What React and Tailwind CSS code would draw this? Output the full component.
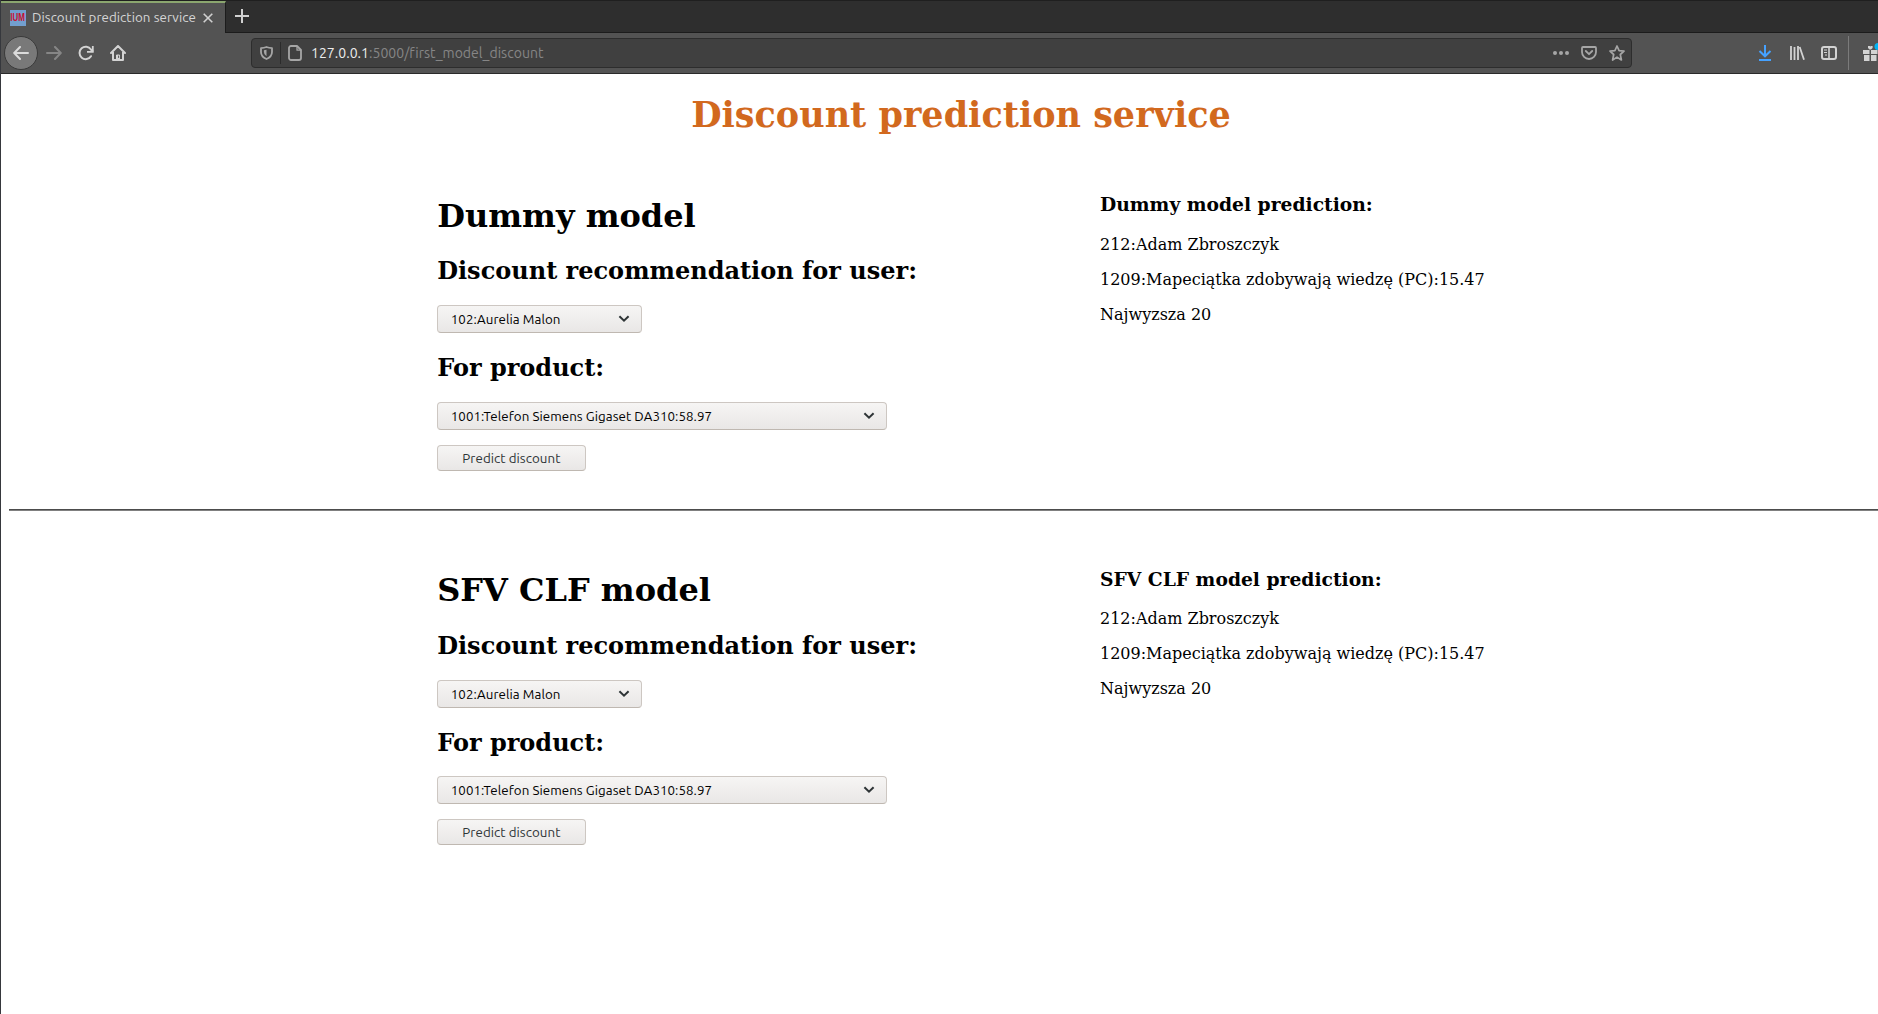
import React from "react";

const UI = "font-['Ubuntu','Noto_Sans',sans-serif]";

function Chevron() {
  return (
    <svg width="12" height="8" viewBox="0 0 12 8" fill="none" stroke="#2e3436" strokeWidth="2">
      <path d="M1.4 1.3 6 5.7 10.6 1.3" />
    </svg>
  );
}

function Select({ className, children }) {
  return (
    <button className={`flex h-7 items-center justify-between rounded-[4px] border border-[#cdc7c2] border-b-[#bfb8b1] bg-linear-to-b from-[#f6f5f4] to-[#e9e7e6] pr-[11px] pl-[12.6px] text-[13.333px] text-black ${UI} ${className}`}>
      <span className="pt-[2.2px] tracking-[0.06px] whitespace-nowrap">{children}</span>
      <Chevron />
    </button>
  );
}

function Model({ name, className }) {
  return (
    <section className={`flex pl-[428.2px] ${className}`}>
      <div className="w-[662.8px] shrink-0 pt-1">
        <h1 className="text-[32px] leading-[38px] font-bold">{name}</h1>
        <h2 className="mt-[22.2px] text-2xl leading-7 font-bold">Discount recommendation for user:</h2>
        <Select className="mt-5 w-[205px]">102:Aurelia Malon</Select>
        <h2 className="mt-[21px] text-2xl leading-7 font-bold">For product:</h2>
        <Select className="mt-[19.8px] w-[450px]">1001:Telefon Siemens Gigaset DA310:58.97</Select>
        <button className={`mt-[15px] flex h-[26px] w-[149px] items-center justify-center rounded-[4px] border border-[#cdc7c2] border-b-[#bfb8b1] bg-linear-to-b from-[#f6f5f4] to-[#e9e7e6] text-[13.333px] text-[#2e3436] ${UI}`}>
          <span className="pt-[2.2px] pr-[0.6px] tracking-[0.06px]">Predict discount</span>
        </button>
      </div>
      <div>
        <h3 className="mt-[0.2px] text-[18.72px] leading-[22px] font-bold">{name} prediction:</h3>
        <p className="mt-[19.8px] text-base leading-[19px]">212:Adam Zbroszczyk</p>
        <p className="mt-4 text-base leading-[19px]">1209:Mapeciątka zdobywają wiedzę (PC):15.47</p>
        <p className="mt-4 text-base leading-[19px]">Najwyzsza 20</p>
      </div>
    </section>
  );
}

function TabStrip() {
  return (
    <div className="flex h-[33px] border-t border-[#1f1f1f] bg-[#2e2e2e]">
      <div className="flex h-8 w-[225px] items-center border-t-2 border-r border-t-[#8ba66f] border-r-[#1c1c1c] bg-[#535353] pb-px pl-[9px]">
        <span className="flex size-4 items-center justify-center bg-[#729fcf] font-['Liberation_Sans',sans-serif] text-[10.5px] leading-none font-bold text-[#c8102c]">
          <span className="scale-x-[0.76]">IUM</span>
        </span>
        <span className="ml-[6px] w-[165px] pt-px text-[13.333px] tracking-[0.07px] whitespace-nowrap text-[#d6d6d6]">Discount prediction service</span>
        <svg className="ml-[6px]" width="10" height="10" viewBox="0 0 10 10" stroke="#d0d0d0" strokeWidth="1.6"><path d="M.7.7l8.6 8.6M9.3.7.7 9.3" /></svg>
      </div>
      <div className="flex flex-1 items-center border-b border-[#1c1c1c] pb-px pl-[9px]">
        <svg width="14" height="14" viewBox="0 0 14 14" stroke="#d0d0d0" strokeWidth="2"><path d="M7 0v14M0 7h14" /></svg>
      </div>
    </div>
  );
}

function NavBar() {
  return (
    <div className="flex h-[41px] items-center border-b border-[#2a2a2a] bg-[#535353]">
      <span className="ml-[3px] flex size-[34px] items-center justify-center rounded-full border border-[#3a3a3a] bg-[#797979]">
        <svg width="16" height="14" viewBox="0 0 16 14" fill="none" stroke="#dcdcdc" strokeWidth="2" strokeLinecap="round" strokeLinejoin="round"><path d="M15 7H1.300M7 1 1.200 7 7 13" /></svg>
      </span>
      <svg className="ml-[8px]" width="16" height="14" viewBox="0 0 16 14" fill="none" stroke="#868686" strokeWidth="2" strokeLinecap="round" strokeLinejoin="round"><path d="M1 7h13.700M9 1l5.800 6L9 13" /></svg>
      <svg className="ml-4" width="16" height="16" viewBox="0 0 16 16" fill="none" stroke="#d3d3d3" strokeWidth="2"><path d="M13 11.200A6.200 6.200 0 1 1 12.900 4.500L14.500 6" strokeLinecap="round" /><path d="M14.800 1v5.800H9" strokeWidth="1.800" /></svg>
      <svg className="ml-4" width="16" height="16" viewBox="0 0 16 16" fill="none" stroke="#d3d3d3" strokeWidth="2" strokeLinejoin="round" strokeLinecap="round"><path d="M1 8l7-7 7 7M3 7v8h10V7" /><path d="M6.500 15v-5h3v5z" fill="#d3d3d3" strokeWidth="1" /><path d="M8.600 11v1.500" stroke="#535353" strokeWidth="1" /></svg>
      <div className="ml-[125px] flex h-[30px] w-[1381px] items-center rounded-[4px] border border-[#2d2d2d] bg-[#404040]">
        <svg className="ml-2" width="13" height="14" viewBox="0 0 13 14" fill="none" stroke="#a6a6a6"><path d="M1 2.200Q4 2 6.500 1 9 2 12 2.200V6q0 4.700-5.500 7Q1 10.700 1 6z" strokeWidth="1.800" strokeLinejoin="round" /><path d="M6.500 3.800v6.500Q3.900 8.800 3.900 6V4.300z" fill="#a6a6a6" stroke="none" /></svg>
        <span className="ml-[7px] h-[22px] w-px bg-[#2b2b2b]" />
        <svg className="ml-[7px]" width="14" height="16" viewBox="0 0 14 16" fill="none" stroke="#a6a6a6" strokeWidth="2" strokeLinejoin="round"><path d="M3 1h6l4 4v8a2 2 0 0 1-2 2H3a2 2 0 0 1-2-2V3a2 2 0 0 1 2-2z" strokeWidth="1.800" /><path d="M9 1v4.200h4" strokeWidth="1.300" /></svg>
        <span className="ml-[9px] pt-[1.5px] text-[14px] tracking-[0.03px] whitespace-nowrap text-[#868686]"><span className="text-[#ededed]">127.0.0.1</span>:5000/first_model_discount</span>
        <div className="ml-auto flex items-center pr-[6px]">
          <svg width="16" height="4" viewBox="0 0 16 4" fill="#a6a6a6"><circle cx="2" cy="2" r="2" /><circle cx="8" cy="2" r="2" /><circle cx="14" cy="2" r="2" /></svg>
          <svg className="ml-3" width="16" height="14" viewBox="0 0 16 14" fill="none" stroke="#a6a6a6" strokeWidth="2" strokeLinecap="round" strokeLinejoin="round"><path d="M2 1h12q1 0 1 1v4a7 7 0 0 1-14 0V2q0-1 1-1zM4.800 5 8 8.200 11.200 5" strokeWidth="1.800" /></svg>
          <svg className="ml-3" width="16" height="16" viewBox="0 0 16 16" fill="none" stroke="#a6a6a6" strokeWidth="1.700" strokeLinejoin="round"><path d="M8 1l2.100 4.600 4.900.5-3.700 3.400L12.400 15 8 12.100 3.600 15l1.100-5.500L1 6.100l4.900-.5z" /></svg>
        </div>
      </div>
      <svg className="ml-[126px]" width="14" height="16" viewBox="0 0 14 16" fill="none" stroke="#45a1ff" strokeWidth="2"><path d="M7 0v11M1.500 6 7 11.300 12.500 6M1 15h12" /></svg>
      <svg className="ml-[17px]" width="16" height="14" viewBox="0 0 16 14" stroke="#d3d3d3" strokeWidth="1.800"><path d="M2 0v14M5.500 1v13M9 0v14M10.700 1l4.300 12.700" /></svg>
      <svg className="ml-4" width="16" height="14" viewBox="0 0 16 14" fill="none" stroke="#d3d3d3"><rect x="1" y="1" width="14" height="12" rx="2" strokeWidth="2" /><path d="M8 1v12" strokeWidth="1.600" /><path d="M3 4h3M3 6.500h3M4 9h2" strokeWidth="1" /></svg>
      <span className="ml-[11px] h-[34px] w-px bg-[#7b7b7b]" />
      <svg className="ml-[14px] shrink-0 overflow-visible" width="15" height="16" viewBox="0 0 15 16" fill="#d3d3d3"><path d="M0 5h6.500v4H0zM8 5h6.500v4H8zM1 10h5.500v6H1zM8 10h5.500v6H8z" /><path d="M5 1h2l.3 1 .3-1h2v2L8 4.500H6.500L5 3z" /><circle cx="15" cy="1.500" r="3.500" fill="#00b3f4" /></svg>
    </div>
  );
}

export default function App() {
  return (
    <div className="flex h-[1014px] w-[1878px] flex-col overflow-hidden border-l border-[#36383d] bg-white font-['DejaVu_Serif',serif] text-black">
      <header className={`shrink-0 ${UI}`}>
        <TabStrip />
        <NavBar />
      </header>
      <main className="ml-2">
        <h1 className="mt-5 w-[1904px] text-center text-[35px] leading-[42px] font-bold text-[#d2691e]">Discount prediction service</h1>
        <Model name="Dummy model" className="mt-[57px]" />
        <div className="mt-[38px] h-[2px] border-t border-[#4c4c4c] bg-[#808080]" />
        <Model name="SFV CLF model" className="mt-[56.4px]" />
      </main>
    </div>
  );
}
